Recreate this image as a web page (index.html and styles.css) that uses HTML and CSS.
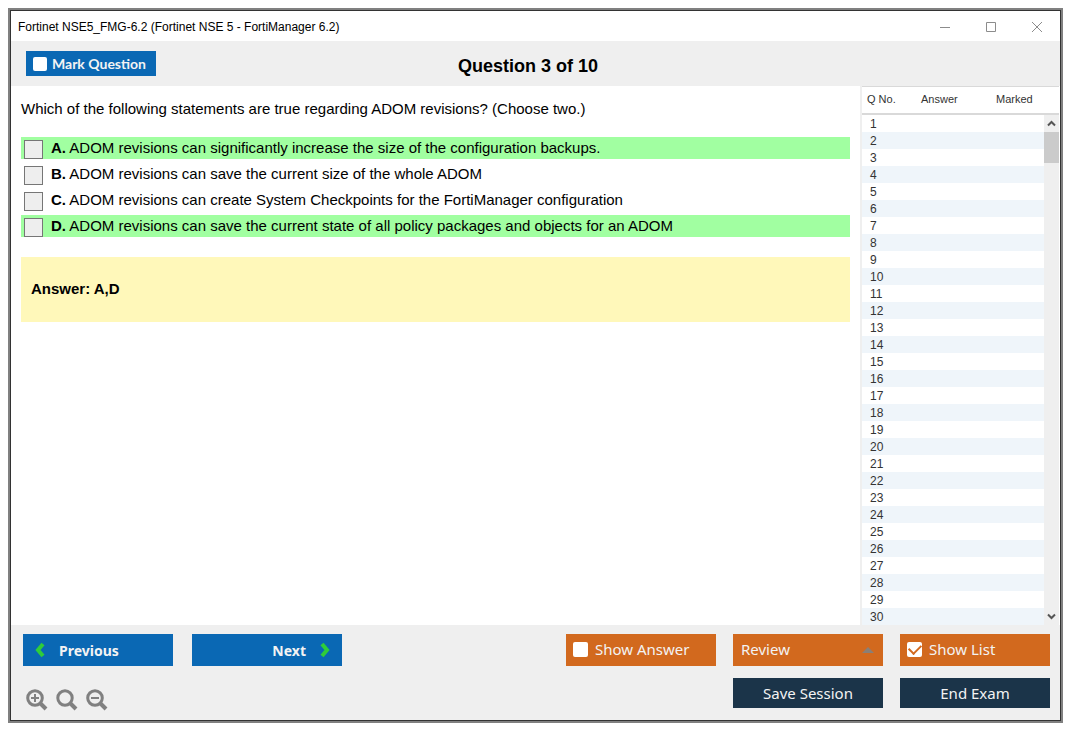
FILE: index.html
```html
<!DOCTYPE html>
<html lang="en">
<head>
<meta charset="utf-8">
<title>Fortinet NSE5_FMG-6.2</title>
<link rel="stylesheet" href="styles.css">
</head>
<body>
<div class="window">
  <header class="titlebar">
    <span class="titlebar-text">Fortinet NSE5_FMG-6.2 (Fortinet NSE 5 - FortiManager 6.2)</span>
    <div class="window-controls">
      <button class="window-button" type="button" aria-label="Minimize"><svg width="12" height="12" viewBox="0 0 12 12"><path d="M1 6.500h10"/></svg></button>
      <button class="window-button" type="button" aria-label="Maximize"><svg width="12" height="12" viewBox="0 0 12 12"><path d="M1.500 1.500h9v9h-9z"/></svg></button>
      <button class="window-button" type="button" aria-label="Close"><svg width="12" height="12" viewBox="0 0 12 12"><path d="M1 1l10 10M11 1L1 11"/></svg></button>
    </div>
  </header>

  <div class="question-bar">
    <label class="toggle toggle-mark"><input class="tick tick-small" type="checkbox">Mark Question</label>
    <h1 class="question-title">Question 3 of 10</h1>
  </div>

  <div class="content">
    <main class="question">
      <p class="question-text">Which of the following statements are true regarding ADOM revisions? (Choose two.)</p>
      <div class="options">
        <label class="option option-correct"><input class="option-box" type="checkbox"><span><b>A.</b> ADOM revisions can significantly increase the size of the configuration backups.</span></label>
        <label class="option"><input class="option-box" type="checkbox"><span><b>B.</b> ADOM revisions can save the current size of the whole ADOM</span></label>
        <label class="option"><input class="option-box" type="checkbox"><span><b>C.</b> ADOM revisions can create System Checkpoints for the FortiManager configuration</span></label>
        <label class="option option-correct"><input class="option-box" type="checkbox"><span><b>D.</b> ADOM revisions can save the current state of all policy packages and objects for an ADOM</span></label>
      </div>
      <p class="answer">Answer: A,D</p>
    </main>

    <aside class="list">
      <div class="list-scroll">
        <table class="list-table">
          <thead><tr><th class="col-number">Q No.</th><th class="col-answer">Answer</th><th class="col-marked">Marked</th></tr></thead>
          <tbody>
            <tr><td>1</td><td></td><td></td></tr>
            <tr><td>2</td><td></td><td></td></tr>
            <tr><td>3</td><td></td><td></td></tr>
            <tr><td>4</td><td></td><td></td></tr>
            <tr><td>5</td><td></td><td></td></tr>
            <tr><td>6</td><td></td><td></td></tr>
            <tr><td>7</td><td></td><td></td></tr>
            <tr><td>8</td><td></td><td></td></tr>
            <tr><td>9</td><td></td><td></td></tr>
            <tr><td>10</td><td></td><td></td></tr>
            <tr><td>11</td><td></td><td></td></tr>
            <tr><td>12</td><td></td><td></td></tr>
            <tr><td>13</td><td></td><td></td></tr>
            <tr><td>14</td><td></td><td></td></tr>
            <tr><td>15</td><td></td><td></td></tr>
            <tr><td>16</td><td></td><td></td></tr>
            <tr><td>17</td><td></td><td></td></tr>
            <tr><td>18</td><td></td><td></td></tr>
            <tr><td>19</td><td></td><td></td></tr>
            <tr><td>20</td><td></td><td></td></tr>
            <tr><td>21</td><td></td><td></td></tr>
            <tr><td>22</td><td></td><td></td></tr>
            <tr><td>23</td><td></td><td></td></tr>
            <tr><td>24</td><td></td><td></td></tr>
            <tr><td>25</td><td></td><td></td></tr>
            <tr><td>26</td><td></td><td></td></tr>
            <tr><td>27</td><td></td><td></td></tr>
            <tr><td>28</td><td></td><td></td></tr>
            <tr><td>29</td><td></td><td></td></tr>
            <tr><td>30</td><td></td><td></td></tr>
          </tbody>
        </table>
      </div>
      <div class="scrollbar">
        <div class="scrollbar-head"></div>
        <button class="scroll-button" type="button" aria-label="Scroll up"><svg width="9" height="7" viewBox="0 0 9 7"><path d="M1 5.500l3.500-3.500 3.500 3.500"/></svg></button>
        <div class="scroll-thumb"></div>
        <button class="scroll-button scroll-down" type="button" aria-label="Scroll down"><svg width="9" height="7" viewBox="0 0 9 7"><path d="M1 1.500l3.500 3.500 3.500-3.500"/></svg></button>
      </div>
    </aside>
  </div>

  <footer class="footer">
    <div class="footer-left">
      <div class="nav">
        <button class="nav-button" type="button"><svg width="10" height="16" viewBox="0 0 10 16"><path d="M8 2L3 8l5 6"/></svg>Previous</button>
        <button class="nav-button nav-next" type="button">Next<svg width="10" height="16" viewBox="0 0 10 16"><path d="M2 2l5 6-5 6"/></svg></button>
      </div>
      <div class="zoom">
        <button class="zoom-button" type="button" aria-label="Zoom in"><svg width="22" height="22" viewBox="0 0 22 22"><circle cx="9" cy="9" r="7.300"/><path class="handle" d="M14.500 14.500l5.500 5.500"/><path class="sign" d="M5 9h8M9 5v8"/></svg></button>
        <button class="zoom-button" type="button" aria-label="Reset zoom"><svg width="22" height="22" viewBox="0 0 22 22"><circle class="bold" cx="9" cy="9" r="7.200"/><path class="handle" d="M14.500 14.500l5.500 5.500"/></svg></button>
        <button class="zoom-button" type="button" aria-label="Zoom out"><svg width="22" height="22" viewBox="0 0 22 22"><circle cx="9" cy="9" r="7.300"/><path class="handle" d="M14.500 14.500l5.500 5.500"/><path class="sign" d="M5 9h8"/></svg></button>
      </div>
    </div>
    <div class="actions">
      <label class="toggle toggle-orange"><input class="tick" type="checkbox">Show Answer</label>
      <div class="review">
        <select class="review-select" aria-label="Review"><option>Review</option></select>
        <svg class="review-arrow" width="12" height="6" viewBox="0 0 12 6"><path d="M6 0l6 6H0z"/></svg>
      </div>
      <label class="toggle toggle-orange"><input class="tick" type="checkbox" checked>Show List</label>
      <button class="dark-button dark-first" type="button">Save Session</button>
      <button class="dark-button" type="button">End Exam</button>
    </div>
  </footer>
</div>
</body>
</html>
```
FILE: styles.css
```css
* {
  box-sizing: border-box;
}

body {
  margin: 0;
  padding: 8px 12px 12px 8px;
  height: 100vh;
  background: #fff;
  color: #000;
  font-family: "Liberation Sans", Arial, sans-serif;
  font-size: 15px;
}

button,
select {
  margin: 0;
  padding: 0;
  border: 0;
  font-family: inherit;
}

.window {
  display: flex;
  flex-direction: column;
  height: 100%;
  padding: 1px;
  border: 2px solid #808080;
  background: #333;
}

.titlebar {
  display: flex;
  align-items: center;
  justify-content: space-between;
  height: 30px;
  padding: 1px 0 0 7px;
  background: #fff;
  font-size: 12px;
}

.window-controls {
  display: flex;
}

.window-button {
  display: flex;
  align-items: center;
  justify-content: center;
  width: 46px;
  height: 28px;
  background: none;
}

.window-button svg {
  fill: none;
  stroke: #8c8c8c;
}

.question-bar {
  display: grid;
  grid-template-columns: 1fr auto 1fr;
  align-items: center;
  height: 45px;
  padding: 0 15px;
  background: #efefef;
}

.question-title {
  margin: 5px 0 0;
  padding-right: 15px;
  font-size: 18px;
}

.toggle {
  display: flex;
  align-items: center;
  gap: 7px;
  padding: 0 0 2px 7px;
  font-family: "Noto Sans", sans-serif;
  color: #f3f3f3;
}

.toggle-mark {
  justify-self: start;
  gap: 5px;
  width: 130px;
  height: 25px;
  padding-bottom: 0;
  background: #0a68b4;
  font-family: Lato, sans-serif;
  font-size: 14px;
  font-weight: 700;
}

.tick {
  appearance: none;
  flex: none;
  display: grid;
  place-items: center;
  width: 15px;
  height: 15px;
  margin: 0;
  border-radius: 2px;
  background: #fff;
}

.tick-small {
  width: 14px;
  height: 14px;
}

.tick:checked::before {
  content: "";
  width: 10px;
  height: 6px;
  margin-bottom: 3px;
  border-left: 2px solid #d2691e;
  border-bottom: 2px solid #d2691e;
  transform: rotate(-45deg);
}

.content {
  display: flex;
  flex: 1;
  min-height: 0;
  background: #fff;
}

.question {
  flex: 1;
  padding: 14px 10px 0;
}

.question-text {
  margin: 0 0 19px;
  line-height: 18px;
}

.options {
  display: flex;
  flex-direction: column;
  gap: 4px;
}

.option {
  display: flex;
  align-items: flex-end;
  gap: 8px;
  height: 22px;
  padding-left: 3px;
  line-height: 22px;
}

.option-correct {
  background: #a1ffa1;
}

.option-box {
  appearance: none;
  width: 19px;
  height: 19px;
  margin: 0;
  border: 1px solid #767676;
  background: #eee;
}

.answer {
  margin: 20px 0 0;
  padding: 23px 10px 24px;
  background: #fff8ba;
  font-weight: 700;
  line-height: 18px;
}

.list {
  display: flex;
  width: 200px;
  border-left: 2px solid #efefef;
  color: #333;
}

.list-scroll {
  flex: 1;
  overflow: hidden;
}

.list-table {
  width: 100%;
  border-collapse: separate;
  border-spacing: 0;
  table-layout: fixed;
  font-size: 12px;
}

.list-table th {
  height: 29px;
  padding: 0 0 3px 5px;
  border-top: 1px solid #d9d9d9;
  border-bottom: 2px solid #d9d9d9;
  font-size: 11px;
  font-weight: 400;
  text-align: left;
}

.col-number {
  width: 54px;
}

.col-answer {
  width: 75px;
}

.list-table td {
  height: 17px;
  padding: 1px 0 0 8px;
  line-height: 16px;
}

.list-table tbody tr:nth-child(even) {
  background: #eff5fa;
}

.scrollbar {
  display: flex;
  flex-direction: column;
  width: 16px;
  border-right: 1px solid #fff;
  background: #efefef;
}

.scrollbar-head {
  height: 29px;
  border-top: 1px solid #d9d9d9;
  border-bottom: 2px solid #d9d9d9;
  background: #fff;
}

.scroll-button {
  display: flex;
  align-items: center;
  justify-content: center;
  height: 17px;
  background: none;
}

.scroll-down {
  margin-top: auto;
}

.scroll-button svg {
  fill: none;
  stroke: #555;
  stroke-width: 2;
}

.scroll-thumb {
  height: 31px;
  background: #cbcbcb;
}

.footer {
  display: flex;
  justify-content: space-between;
  height: 95px;
  padding: 9px 10px 0 12px;
  background: #efefef;
}

.footer-left {
  display: flex;
  flex-direction: column;
  gap: 23px;
}

.nav {
  display: flex;
  gap: 19px;
}

.nav-button {
  display: flex;
  align-items: center;
  gap: 14px;
  width: 150px;
  height: 32px;
  padding: 0 12px;
  background: #0a68b4;
  color: #f3f3f3;
  font-family: "Noto Sans", sans-serif;
  font-size: 14px;
  font-weight: 700;
}

.nav-next {
  justify-content: flex-end;
}

.nav-button svg {
  fill: none;
  stroke: #2fcd3a;
  stroke-width: 4;
}

.zoom {
  display: flex;
  gap: 8px;
  padding-left: 3px;
}

.zoom-button {
  width: 22px;
  height: 22px;
  background: none;
}

.zoom-button svg {
  display: block;
  fill: none;
  stroke: #808080;
  stroke-width: 3;
}

.zoom-button .sign {
  stroke-width: 2;
}

.zoom-button .handle {
  stroke-width: 4;
}

.actions {
  display: grid;
  grid-template-columns: repeat(3, 150px);
  grid-template-rows: 32px 30px;
  gap: 12px 17px;
  font-family: "Noto Sans", sans-serif;
}

.toggle-orange {
  background: #d2691e;
}

.review {
  display: grid;
  align-items: center;
  background: #d2691e;
}

.review-select {
  grid-area: 1 / 1;
  appearance: none;
  height: 32px;
  padding: 0 0 2px 8px;
  background: none;
  color: #f3f3f3;
  font-size: 15px;
}

.review-arrow {
  grid-area: 1 / 1;
  justify-self: end;
  margin-right: 9px;
  fill: #8a7f76;
  pointer-events: none;
}

.dark-button {
  background: #1b3449;
  color: #f3f3f3;
  font-size: 15px;
}

.dark-first {
  grid-column: 2;
}
```
